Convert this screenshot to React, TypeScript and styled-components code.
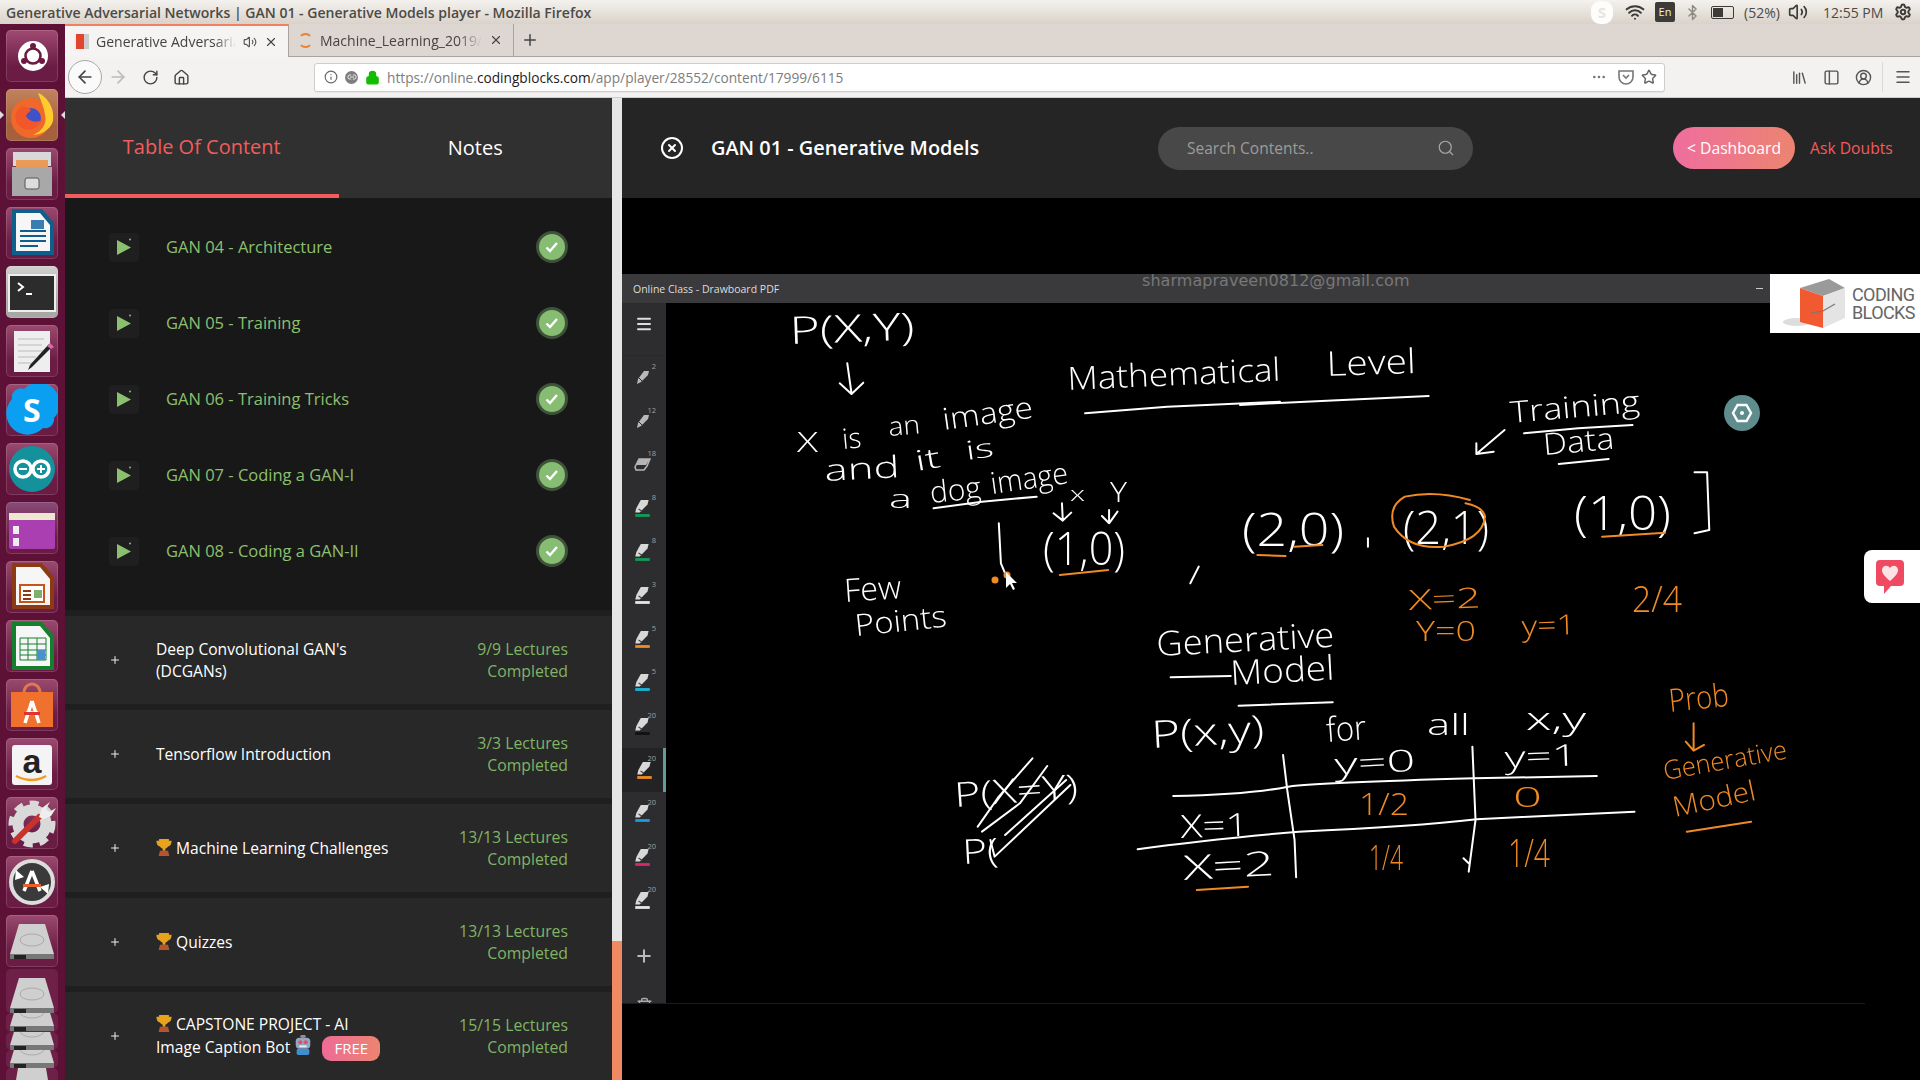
import React from "react";
import styled, { createGlobalStyle } from "styled-components";
import {
  ArrowLeft,
  ArrowRight,
  RotateCw,
  Home,
  Info,
  Link2,
  Lock,
  Ellipsis,
  Star,
  Library,
  PanelLeft,
  CircleUserRound,
  Menu,
  X,
  Plus,
  Search,
  Volume2,
  Wifi,
  Bluetooth,
  CircleX,
  Trash2,
  Settings,
} from "lucide-react";

const GlobalStyle = createGlobalStyle`
  html, body {
    margin: 0;
    width: 1920px;
    height: 1080px;
    overflow: hidden;
    background: #000;
    font-family: "Open Sans", "Noto Sans", sans-serif;
  }
  * { box-sizing: border-box; }
`;

const lectures = [
  "GAN 04 - Architecture",
  "GAN 05 - Training",
  "GAN 06 - Training Tricks",
  "GAN 07 - Coding a GAN-I",
  "GAN 08 - Coding a GAN-II",
];

const pens = [
  { n: "2", kind: "pen" },
  { n: "12", kind: "pen" },
  { n: "18", kind: "eraser" },
  { n: "8", kind: "marker", color: "#0f9d58" },
  { n: "8", kind: "marker", color: "#0f9d58" },
  { n: "3", kind: "marker", color: "#e6e6e6" },
  { n: "5", kind: "marker", color: "#f08a24" },
  { n: "5", kind: "marker", color: "#19b5d8" },
  { n: "20", kind: "marker", color: "#111" },
  { n: "20", kind: "marker", color: "#f08a24", active: true },
  { n: "20", kind: "marker", color: "#1a9be0" },
  { n: "20", kind: "marker", color: "#d8276e" },
  { n: "20", kind: "marker", color: "#e6e6e6" },
];

// [text, x, baseline, width, font size, rotation]
type Note = [string, number, number, number, number, number];

const whiteNotes: Note[] = [
  ["P(X,Y)", 790, 344, 125, 38, -2],
  ["Mathematical", 1068, 390, 213, 32, -2.5],
  ["Level", 1327, 376, 89, 34, -2],
  ["X", 797, 452, 21, 28, 0],
  ["is", 843, 449, 19, 28, -5],
  ["an", 889, 436, 32, 26, -5],
  ["image", 944, 430, 91, 30, -8],
  ["and", 825, 481, 75, 30, -3],
  ["it", 917, 471, 25, 28, -10],
  ["is", 967, 460, 28, 26, -8],
  ["a", 889, 508, 23, 26, 0],
  ["dog", 931, 503, 51, 30, -6],
  ["image", 992, 494, 78, 30, -8],
  ["x", 1070, 501, 15, 20, 0],
  ["Y", 1110, 502, 17, 28, 0],
  ["(1,0)", 1043, 565, 82, 46, 0],
  ["Few", 845, 602, 57, 32, -4],
  ["Points", 856, 636, 92, 30, -6],
  ["Generative", 1157, 656, 178, 34, -3],
  ["Model", 1231, 685, 104, 34, -3],
  ["P(x,y)", 1152, 748, 113, 38, -3],
  ["for", 1327, 742, 40, 34, -4],
  ["all", 1427, 735, 43, 30, 0],
  ["x,y", 1526, 730, 60, 32, 0],
  ["y=0", 1335, 775, 81, 30, -3],
  ["y=1", 1505, 768, 73, 30, -2],
  ["X=1", 1181, 838, 68, 32, -2],
  ["X=2", 1184, 880, 91, 34, -3],
  ["Training", 1511, 423, 130, 30, -5],
  ["Data", 1544, 455, 71, 30, -5],
  ["(2,0)", 1242, 546, 102, 46, 0],
  ["(2,1)", 1403, 544, 86, 46, 0],
  ["(1,0)", 1574, 530, 97, 48, 0],
  ["P(X=Y)", 955, 807, 124, 34, -4],
  ["P(", 963, 864, 36, 34, -3],
];

const orangeNotes: Note[] = [
  ["X=2", 1409, 610, 72, 28, -2],
  ["Y=0", 1416, 641, 60, 28, 0],
  ["y=1", 1522, 636, 54, 28, -2],
  ["2/4", 1632, 612, 50, 36, 0],
  ["1/2", 1359, 815, 50, 32, 0],
  ["0", 1513, 807, 29, 28, 0],
  ["1/4", 1369, 870, 34, 34, 0],
  ["1/4", 1508, 867, 42, 38, 0],
  ["Prob", 1670, 712, 60, 32, -6],
  ["Generative", 1665, 780, 125, 26, -10],
  ["Model", 1675, 817, 84, 28, -12],
];

const Trophy = () => (
  <svg width="16" height="17" viewBox="0 0 17 19">
    <path d="M3 0h11v2h3c0 4-1.500 6-4 6.500-.6 1.200-1.700 2-3 2.400V13H7v-2.100C5.700 10.500 4.600 9.700 4 8.500 1.500 8 0 6 0 2h3z" fill="#e8a31e" />
    <path d="M4 13h9l1.500 6h-12z" fill="#b5552e" />
  </svg>
);

const Robot = () => (
  <svg width="18" height="20" viewBox="0 0 18 22">
    <rect x="6" y="0" width="6" height="3" rx="1.500" fill="#a88" />
    <rect x="1" y="3" width="16" height="12" rx="4" fill="#8fa9c4" />
    <circle cx="6" cy="8" r="2.300" fill="#e0506a" />
    <circle cx="12" cy="8" r="2.300" fill="#e0506a" />
    <rect x="5" y="11.500" width="8" height="2" fill="#eee" />
    <rect x="2" y="15" width="14" height="7" rx="2" fill="#3f8fd0" />
  </svg>
);

const App = () => {
  return (
    <Screen>
      <GlobalStyle />
      <TopPanel>
        <WindowTitle>Generative Adversarial Networks | GAN 01 - Generative Models player - Mozilla Firefox</WindowTitle>
        <Tray>
          <SkypeBlob>S</SkypeBlob>
          <Wifi size={20} strokeWidth={2.4} color="#3c3b37" />
          <LangBox>En</LangBox>
          <Bluetooth size={17} color="#8e8b86" />
          <BatteryIcon>
            <BatteryFill />
          </BatteryIcon>
          <TrayText $w={35} $left={1}>(52%)</TrayText>
          <Volume2 size={20} color="#3c3b37" />
          <TrayText $w={62} $left={6}>12:55 PM</TrayText>
          <Settings size={18} color="#3c3b37" strokeWidth={2.6} />
        </Tray>
      </TopPanel>
      <Body>
        <Launcher />
        <Main>
          <TabStrip>
            <TabItem $active>
              <FavIcon />
              <TabLabel>Generative Adversarial Networks</TabLabel>
              <Volume2 size={14} color="#555" />
              <X size={14} color="#444" />
            </TabItem>
            <TabItem>
              <Spinner />
              <TabLabel>Machine_Learning_2019/Coding</TabLabel>
              <X size={14} color="#444" />
            </TabItem>
            <NewTab>
              <Plus size={18} color="#444" />
            </NewTab>
          </TabStrip>
          <Toolbar>
            <BackButton>
              <ArrowLeft size={20} color="#444" />
            </BackButton>
            <NavIcon $w={32}>
              <ArrowRight size={20} color="#bbb" />
            </NavIcon>
            <NavIcon $w={32}>
              <RotateCw size={17} color="#444" />
            </NavIcon>
            <NavIcon $w={30}>
              <Home size={17} color="#444" />
            </NavIcon>
            <UrlBar>
              <Info size={14} color="#666" />
              <ChainDot>
                <Link2 size={10} color="#fff" />
              </ChainDot>
              <Lock size={15} color="#12bc00" fill="#12bc00" />
              <UrlText>
                https://online.<b>codingblocks.com</b>/app/player/28552/content/17999/6115
              </UrlText>
              <Ellipsis size={16} color="#777" />
              <PocketIcon viewBox="0 0 16 16">
                <path d="M1 2h14v6a7 7 0 0 1-14 0z" fill="none" stroke="#777" strokeWidth="1.600" />
                <path d="M5 6l3 3 3-3" fill="none" stroke="#777" strokeWidth="1.600" />
              </PocketIcon>
              <Star size={16} color="#666" strokeWidth={2.2} />
            </UrlBar>
            <RightTools>
              <Library size={17} color="#555" />
              <PanelLeft size={17} color="#555" />
              <CircleUserRound size={17} color="#555" />
              <ToolDivider />
              <Menu size={18} color="#555" />
            </RightTools>
          </Toolbar>
          <Page>
            <Sidebar>
              <SideTabs>
                <SideTab $active>Table Of Content</SideTab>
                <SideTab>Notes</SideTab>
              </SideTabs>
              <LectureList>
                {lectures.map((name) => (
                  <LectureRow key={name}>
                    <PlayTile>
                      <svg width="18" height="18" viewBox="0 0 18 18">
                        <path d="M2 2l14 7.500-14 7.500z" fill="#8bc06f" />
                        <circle cx="15" cy="1.500" r="1" fill="#8bc06f" />
                      </svg>
                    </PlayTile>
                    <LectureName>{name}</LectureName>
                    <CheckBadge>
                      <svg width="14" height="12" viewBox="0 0 14 12">
                        <path d="M1.500 6.500l3.500 3.500 7-8" fill="none" stroke="#fff" strokeWidth="2.400" />
                      </svg>
                    </CheckBadge>
                  </LectureRow>
                ))}
              </LectureList>
              <SectionRow>
                <Plus size={12} color="#eee" />
                <SectionTitle>Deep Convolutional GAN's (DCGANs)</SectionTitle>
                <SectionCount>9/9 Lectures Completed</SectionCount>
              </SectionRow>
              <SectionRow>
                <Plus size={12} color="#eee" />
                <SectionTitle>Tensorflow Introduction</SectionTitle>
                <SectionCount>3/3 Lectures Completed</SectionCount>
              </SectionRow>
              <SectionRow>
                <Plus size={12} color="#eee" />
                <SectionTitle>
                  <Trophy /> Machine Learning Challenges
                </SectionTitle>
                <SectionCount>13/13 Lectures Completed</SectionCount>
              </SectionRow>
              <SectionRow>
                <Plus size={12} color="#eee" />
                <SectionTitle>
                  <Trophy /> Quizzes
                </SectionTitle>
                <SectionCount>13/13 Lectures Completed</SectionCount>
              </SectionRow>
              <SectionRow>
                <Plus size={12} color="#eee" />
                <SectionTitle>
                  <Trophy /> CAPSTONE PROJECT - AI Image Caption Bot <Robot /> <FreeTag>FREE</FreeTag>
                </SectionTitle>
                <SectionCount>15/15 Lectures Completed</SectionCount>
              </SectionRow>
            </Sidebar>
            <ScrollTrack>
              <ScrollThumb />
            </ScrollTrack>
            <Content>
              <ContentHeader>
                <CircleX size={24} color="#fff" strokeWidth={2} />
                <VideoTitle>GAN 01 - Generative Models</VideoTitle>
                <SearchBox>
                  <SearchHint>Search Contents..</SearchHint>
                  <Search size={18} color="#aaa" strokeWidth={1.500} />
                </SearchBox>
                <DashButton>&lt; Dashboard</DashButton>
                <AskLink>Ask Doubts</AskLink>
              </ContentHeader>
              <VideoArea>
                <Watermark>sharmapraveen0812@gmail.com</Watermark>
                <LogoPanel>
                  <svg width="64" height="56" viewBox="0 0 64 56">
                    <ellipse cx="14" cy="46" rx="14" ry="4" fill="#ddd" />
                    <path d="M17 12L46 3l16 9-22 8z" fill="#9a9a9a" />
                    <path d="M17 12l23 8v32l-23-6z" fill="#f15a31" />
                    <path d="M40 20l22-8v30l-22 10z" fill="#e4e4e4" />
                    <path d="M28 37l12-2 12-7" fill="none" stroke="#777" strokeWidth="1.200" />
                  </svg>
                  <LogoWords>
                    CODING
                    <br />
                    BLOCKS
                  </LogoWords>
                </LogoPanel>
                <LikeButton>
                  <svg width="30" height="36" viewBox="0 0 30 36">
                    <path d="M5 1h20a4 4 0 0 1 4 4v18a4 4 0 0 1-4 4H16l-7 8v-8H5a4 4 0 0 1-4-4V5a4 4 0 0 1 4-4z" fill="#ee4a62" />
                    <path d="M15 22C9 17 7 14 7 11c0-4.500 5.500-6 8-2 2.500-4 8-2.500 8 2 0 3-2 6-8 11z" fill="#fbe3e6" />
                  </svg>
                </LikeButton>
                <WindowBar>
                  <WindowName>Online Class - Drawboard PDF</WindowName>
                  <WindowMin />
                </WindowBar>
                <BoardRow>
                  <ToolRail>
                    <RailMenu>
                      <Menu size={18} color="#ddd" strokeWidth={2.6} />
                    </RailMenu>
                    {pens.map((p, i) => (
                      <ToolSlot key={i} $active={p.active}>
                        <ToolSize>{p.n}</ToolSize>
                        <PenGlyph kind={p.kind} color={p.color} />
                      </ToolSlot>
                    ))}
                    <RailAdd>
                      <Plus size={20} color="#bbb" strokeWidth={2.4} />
                    </RailAdd>
                    <RailTrash>
                      <Trash2 size={17} color="#aaa" />
                    </RailTrash>
                  </ToolRail>
                  <Board viewBox="666 303 1254 700" width="1254" height="700">
                    {whiteNotes.map(([t, x, y, w, s, r], i) => (
                      <NoteText key={i} x={x} y={y} fontSize={s} textLength={w} lengthAdjust="spacingAndGlyphs" transform={`rotate(${r} ${x} ${y})`} fill="#fff">
                        {t}
                      </NoteText>
                    ))}
                    {orangeNotes.map(([t, x, y, w, s, r], i) => (
                      <NoteText key={i} x={x} y={y} fontSize={s} textLength={w} lengthAdjust="spacingAndGlyphs" transform={`rotate(${r} ${x} ${y})`} fill="#f08a24">
                        {t}
                      </NoteText>
                    ))}
                    <g transform="translate(620 270) scale(.4209 .3333)">
                      <Stroke d="M540 280L550 370M522 340L550 372L578 338" />
                      <Stroke d="M1105 430L1300 410L1568 395" />
                      <Stroke d="M745 715L860 695L990 680" />
                      <Stroke d="M900 760L905 880L915 910" />
                      <Stroke d="M1050 700L1052 750M1030 730L1052 752L1072 728M1162 720L1162 760M1145 738L1162 760L1182 725" />
                      <Stroke d="M1375 890L1355 940" />
                      <Stroke d="M1045 915L1160 900" $orange />
                    </g>
                    <g transform="translate(1240 270) scale(.4337 .3333)">
                      <Stroke d="M0 405L200 392L435 378" />
                      <Stroke d="M655 490L780 475L905 465" />
                      <Stroke d="M735 582L850 567" />
                      <Stroke d="M610 480L545 552M545 520L545 552L585 545" />
                      <Stroke d="M295 805L295 830" />
                      <Stroke d="M1048 607L1077 607L1082 780L1048 790" />
                      <Stroke d="M40 855L105 858M125 830L190 825M835 800L980 788" $orange />
                      <Stroke d="M530 690Q450 660 380 680Q340 710 355 770Q390 840 470 830Q560 810 565 740Q560 710 520 700" $orange />
                    </g>
                    <g transform="translate(620 640) scale(.4209 .3333)">
                      <Stroke d="M850 560L900 470L980 355M860 575L950 490L1015 378M915 585L1060 420M890 650L1070 435M890 650L880 600" />
                    </g>
                    <g transform="translate(1100 640) scale(.523 .3333)">
                      <Stroke d="M135 112L250 108M265 197L445 187" />
                      <Stroke d="M140 468Q280 465 360 440Q420 428 715 415L950 408" />
                      <Stroke d="M72 628Q200 600 380 575Q600 560 720 538L1022 515" />
                      <Stroke d="M350 345L358 450L372 600L375 712M712 320L718 540L705 695M695 655L705 670" />
                      <Stroke d="M185 750L283 740M1122 575L1245 545" $orange />
                      <Stroke d="M1135 250L1135 330M1120 305L1135 332L1155 315" $orange />
                    </g>
                    <circle cx="995" cy="580" r="3.500" fill="#f08a24" />
                    <circle cx="1007" cy="575" r="3.500" fill="#f08a24" />
                    <path d="M1006 572v16l4-4 3 6 2-1-3-6h5z" fill="#fff" />
                    <circle cx="1742" cy="413" r="18" fill="#5f8c8c" />
                    <path d="M1733 413l4.500-8h9l4.500 8-4.500 8h-9z" fill="none" stroke="#fff" strokeWidth="2.400" />
                    <circle cx="1742" cy="413" r="2" fill="#fff" />
                  </Board>
                </BoardRow>
                <BottomRule />
              </VideoArea>
            </Content>
          </Page>
        </Main>
      </Body>
    </Screen>
  );
};

export default App;

const PenGlyph = ({ kind, color }: { kind: string; color?: string }) => {
  if (kind === "eraser") {
    return (
      <svg width="17" height="13" viewBox="0 0 17 13">
        <path d="M5 1h11l-3 7-3 4H2l-1-3z" fill="none" stroke="#b5b5b5" strokeWidth="1.500" />
        <path d="M5 1h11l-4 6H2z" fill="#b5b5b5" />
      </svg>
    );
  }
  if (kind === "pen") {
    return (
      <svg width="14" height="15" viewBox="0 0 14 15">
        <path d="M8 1h5l-1 4-7 7-4 2 1-5z" fill="#b8b8b8" />
        <path d="M3 8l3 3" stroke="#2d2d30" />
      </svg>
    );
  }
  return (
    <svg width="17" height="19" viewBox="0 0 15 17">
      <path d="M6 1h7l-1 4-7 7H1l1-4z" fill="#d8d8d8" />
      <path d="M4 9l3 2" stroke="#444" />
      <rect x="1" y="13.500" width="13" height="2.500" fill={color} />
    </svg>
  );
};

const Launcher = () => (
  <LauncherColumn>
    <Tile $bg="#a04a72">
      <svg width="52" height="52" viewBox="0 0 52 52">
        <circle cx="27" cy="26" r="15" fill="#fff" />
        <circle cx="27" cy="26" r="7.500" fill="none" stroke="#6e1a40" strokeWidth="2.600" />
        <circle cx="27" cy="16" r="3" fill="#6e1a40" />
        <circle cx="18" cy="31" r="3" fill="#6e1a40" />
        <circle cx="36" cy="31" r="3" fill="#6e1a40" />
      </svg>
    </Tile>
    <Tile $bg="#c0845e" $end="#a6603e" $running>
      <svg width="52" height="52" viewBox="0 0 52 52">
        <circle cx="25" cy="29" r="20" fill="#f0692a" />
        <path d="M32 4c10 4 17 16 15 28-3 10-14 14-20 14 10-4 14-12 12-20-1-8-4-14-7-22z" fill="#ffcb2d" />
        <circle cx="25" cy="29" r="10" fill="#3f52c8" />
        <path d="M10 24c4-8 10-8 15-3-2 3-4 3-5 6 3 6 10 7 16 4-3 8-12 12-20 8-6-4-8-10-6-15z" fill="#f2572a" />
      </svg>
    </Tile>
    <Tile $bg="#9a4a6e">
      <svg width="52" height="52" viewBox="0 0 52 52">
        <path d="M7 4h38v14H7z" fill="#d8d8d8" />
        <path d="M10 12h32v8H10z" fill="#e89a56" />
        <path d="M6 19h40v29H6z" fill="#a8a8a8" />
        <rect x="19" y="30" width="14" height="11" rx="2" fill="#ddd" stroke="#555" />
      </svg>
    </Tile>
    <Tile $bg="#9a4a6e">
      <svg width="52" height="52" viewBox="0 0 52 52">
        <path d="M6 2h30l12 14v32H6z" fill="#0f5f8c" />
        <path d="M10 6h24l10 12v26H10z" fill="#f6f6f6" />
        <path d="M14 24h26M14 29h26M14 34h26M14 39h18" stroke="#0f5f8c" strokeWidth="2" />
        <rect x="25" y="13" width="13" height="9" fill="#3a7db0" />
      </svg>
    </Tile>
    <Tile $bg="#d2d0ce" $end="#a9a7a5">
      <svg width="52" height="52" viewBox="0 0 52 52">
        <rect x="3" y="9" width="46" height="36" fill="#2c2c2c" stroke="#eee" strokeWidth="2" />
        <path d="M12 17l5 4-5 4" fill="none" stroke="#fff" strokeWidth="2" />
        <path d="M20 28h6" stroke="#fff" strokeWidth="2" />
      </svg>
    </Tile>
    <Tile $bg="#9a4a6e">
      <svg width="52" height="52" viewBox="0 0 52 52">
        <rect x="8" y="6" width="36" height="41" fill="#eee" />
        <path d="M12 14h26M12 20h24M12 26h26M12 32h18M12 38h16" stroke="#bbb" />
        <path d="M46 22l-20 20-4 3 2-5 19-21z" fill="#222" />
        <path d="M44 18l4 4-3 2-4-3z" fill="#d86ba8" />
      </svg>
    </Tile>
    <Tile $bg="#9a4a6e">
      <svg width="52" height="52" viewBox="0 0 52 52">
        <path d="M18 5a9 9 0 0 0-12 10 20 20 0 0 0 31 29 9 9 0 0 0 11-10A20 20 0 0 0 18 5z" fill="#0a9ff0" />
        <text x="17" y="38" fontSize="32" fontFamily="Open Sans" fontWeight="700" fill="#fff">S</text>
      </svg>
    </Tile>
    <Tile $bg="#9a4a6e">
      <svg width="52" height="52" viewBox="0 0 52 52">
        <circle cx="26" cy="26" r="23" fill="#14919b" />
        <circle cx="17" cy="26" r="8" fill="none" stroke="#fff" strokeWidth="3.500" />
        <circle cx="35" cy="26" r="8" fill="none" stroke="#fff" strokeWidth="3.500" />
        <path d="M13 26h8M31 26h8M35 22v8" stroke="#fff" strokeWidth="2" />
      </svg>
    </Tile>
    <Tile $bg="#8a4a78">
      <svg width="52" height="52" viewBox="0 0 52 52">
        <rect x="3" y="11" width="46" height="36" rx="2" fill="#a93fb0" />
        <rect x="3" y="11" width="46" height="7" fill="#eee7cf" />
        <rect x="7" y="24" width="6" height="8" fill="#eee" />
        <rect x="7" y="36" width="6" height="8" fill="#eee" />
      </svg>
    </Tile>
    <Tile $bg="#9a4a6e">
      <svg width="52" height="52" viewBox="0 0 52 52">
        <path d="M6 2h30l12 14v32H6z" fill="#8c3a14" />
        <path d="M10 6h24l10 12v26H10z" fill="#f6f6f6" />
        <rect x="14" y="24" width="24" height="17" fill="#fff" stroke="#c8541c" strokeWidth="2" />
        <path d="M17 30h8M17 34h8M17 38h8" stroke="#8c3a14" strokeWidth="2" />
        <rect x="28" y="29" width="8" height="8" fill="#7fb069" />
      </svg>
    </Tile>
    <Tile $bg="#9a4a6e">
      <svg width="52" height="52" viewBox="0 0 52 52">
        <path d="M6 2h30l12 14v34H6z" fill="#14802e" />
        <path d="M10 6h24l10 12v28H10z" fill="#f6f6f6" />
        <path d="M14 18h26v22H14zM14 24h26M14 30h26M14 35h26M22 18v22M31 18v22" fill="none" stroke="#14802e" />
        <rect x="31" y="30" width="8" height="10" fill="#4a90d0" />
      </svg>
    </Tile>
    <Tile $bg="#9a4a6e">
      <svg width="52" height="52" viewBox="0 0 52 52">
        <path d="M18 14c0-12 16-12 16 0" fill="none" stroke="#e07a4a" strokeWidth="3" />
        <path d="M5 13h42v35H5z" fill="#f0702e" />
        <path d="M26 22l-7 22M26 22l7 22M20 34h12" fill="none" stroke="#fff" strokeWidth="3.500" />
        <rect x="18" y="33" width="16" height="3" fill="#d33" />
      </svg>
    </Tile>
    <Tile $bg="#9a4a6e">
      <svg width="52" height="52" viewBox="0 0 52 52">
        <rect x="6" y="7" width="40" height="40" rx="3" fill="#f4f4f4" />
        <text x="26" y="35" fontSize="34" fontFamily="Liberation Sans" fontWeight="700" textAnchor="middle" fill="#222">a</text>
        <path d="M10 38q16 8 30 0" fill="none" stroke="#f59a1a" strokeWidth="2.500" />
      </svg>
    </Tile>
    <Tile $bg="#9a4a6e">
      <svg width="52" height="52" viewBox="0 0 52 52">
        <circle cx="26" cy="27" r="14" fill="none" stroke="#d9d9d9" strokeWidth="11" />
        <circle cx="26" cy="27" r="21" fill="none" stroke="#d9d9d9" strokeWidth="5" strokeDasharray="9 7" />
        <path d="M9 44L33 20" stroke="#c8322c" strokeWidth="6" strokeLinecap="round" />
        <path d="M33 20l3-9 8-6-4 7 3 3 7-4-5 8-8 3z" fill="#eee" />
      </svg>
    </Tile>
    <Tile $bg="#9a4a6e">
      <svg width="52" height="52" viewBox="0 0 52 52">
        <circle cx="26" cy="26" r="21" fill="#3a3a3a" stroke="#ddd" strokeWidth="4" />
        <path d="M26 15l-8 20M26 15l8 20" fill="none" stroke="#fff" strokeWidth="3.500" />
        <rect x="17" y="28" width="18" height="3" fill="#e8602c" />
        <path d="M10 14l-1 10 9-3zM42 38l1-10-9 3z" fill="#fff" />
      </svg>
    </Tile>
    <Tile $bg="#9a4a6e">
      <DiskDrawing />
    </Tile>
    <StackTile $h={44}>
      <DiskDrawing />
    </StackTile>
    <StackTile $h={19}>
      <DiskDrawing />
    </StackTile>
    <StackTile $h={18}>
      <DiskDrawing />
    </StackTile>
    <StackTile $h={18}>
      <DiskDrawing />
    </StackTile>
    <StackTile $h={18}>
      <svg width="52" height="52" viewBox="0 0 52 52">
        <path d="M12 26h28l3 18H9z" fill="#cfcfcf" />
      </svg>
    </StackTile>
  </LauncherColumn>
);

const DiskDrawing = () => (
  <svg width="52" height="52" viewBox="0 0 52 52">
    <path d="M13 9h26l9 30H4z" fill="#cfcfcf" />
    <ellipse cx="26" cy="25" rx="12" ry="6" fill="none" stroke="#aaa" />
    <path d="M4 39h44v5H4z" fill="#777" />
    <path d="M8 40h12v4H8z" fill="#222" />
  </svg>
);

const Screen = styled.div`
  width: 1920px;
  height: 1080px;
  display: flex;
  flex-direction: column;
  overflow: hidden;
`;

const TopPanel = styled.div`
  height: 24px;
  flex-shrink: 0;
  display: flex;
  align-items: center;
  justify-content: space-between;
  padding: 0 8px 0 6px;
  background: linear-gradient(#f4f2ee, #dad2ca);
`;

const WindowTitle = styled.div`
  font-size: 14.05px;
  font-weight: 600;
  color: #4c4a45;
  white-space: nowrap;
`;

const Tray = styled.div`
  display: flex;
  align-items: center;
  gap: 9px;
`;

const SkypeBlob = styled.div`
  width: 22px;
  height: 23px;
  margin-right: 3px;
  border-radius: 9px;
  background: #fdfdfc;
  color: #e9e4df;
  font-size: 15px;
  font-weight: 700;
  text-align: center;
  line-height: 23px;
`;

const LangBox = styled.div`
  width: 20px;
  height: 20px;
  margin-left: 1px;
  border-radius: 2px;
  background: #3c3b37;
  color: #f2efeb;
  font-size: 11px;
  line-height: 20px;
  text-align: center;
`;

const BatteryIcon = styled.div`
  width: 23px;
  height: 13px;
  margin-left: 1px;
  padding: 1px;
  border: 1.5px solid #3c3b37;
  border-radius: 2px;
`;

const BatteryFill = styled.div`
  width: 55%;
  height: 100%;
  background: #3c3b37;
`;

const TrayText = styled.div<{ $w: number; $left: number }>`
  width: ${(p) => p.$w}px;
  margin-left: ${(p) => p.$left}px;
  color: #4c4a45;
  font-size: 14px;
  white-space: nowrap;
`;

const Body = styled.div`
  flex: 1;
  min-height: 0;
  display: flex;
`;

const LauncherColumn = styled.div`
  width: 65px;
  flex-shrink: 0;
  display: flex;
  flex-direction: column;
  gap: 7px;
  padding: 6px 0 0 6px;
  background: #5e1136;
  overflow: hidden;
`;

const Tile = styled.div<{ $bg: string; $end?: string; $running?: boolean }>`
  position: relative;
  width: 52px;
  height: 52px;
  flex-shrink: 0;
  border-radius: 5px;
  background: linear-gradient(180deg, ${(p) => p.$bg}, ${(p) => p.$end || "#6a1c44"} 70%);
  box-shadow: inset 0 0 0 1px rgba(255, 255, 255, 0.14);

  ${(p) =>
    p.$running &&
    `
    &::after {
      content: "";
      position: absolute;
      right: -7px;
      top: 22px;
      border: 4px solid transparent;
      border-right-color: #ddd;
      border-left-width: 0;
    }
    &::before {
      content: "";
      position: absolute;
      left: -6px;
      top: 22px;
      border: 4px solid transparent;
      border-left-color: #ddd;
      border-right-width: 0;
    }
  `}
`;

const StackTile = styled.div<{ $h: number }>`
  height: ${(p) => p.$h}px;
  width: 52px;
  flex-shrink: 0;
  margin-top: ${(p) => (p.$h > 30 ? -5 : -7)}px;
  overflow: hidden;
  border-radius: 5px;
  background: #6e2048;

  svg {
    margin-top: ${(p) => (p.$h > 30 ? 0 : -26)}px;
  }
`;

const Main = styled.div`
  flex: 1;
  min-width: 0;
  display: flex;
  flex-direction: column;
`;

const TabStrip = styled.div`
  height: 33px;
  flex-shrink: 0;
  display: flex;
  background: #ded6d0;
  border-bottom: 1px solid #a9a39d;
`;

const TabItem = styled.div<{ $active?: boolean }>`
  width: ${(p) => (p.$active ? 224 : 225)}px;
  height: ${(p) => (p.$active ? 33 : 32)}px;
  display: flex;
  align-items: center;
  gap: 7px;
  padding: 0 10px 0 9px;
  background: ${(p) => (p.$active ? "#f5f4f2" : "transparent")};
  border-top: ${(p) => (p.$active ? "2px solid #f08060" : "none")};
  border-right: 1px solid #a9a39d;
  font-size: 14px;
  color: #444;
`;

const FavIcon = styled.div`
  width: 15px;
  height: 15px;
  flex-shrink: 0;
  background: linear-gradient(90deg, #eee 15%, #e2452c 15%, #e2452c 70%, #ccc 70%);
`;

const Spinner = styled.div`
  width: 15px;
  height: 15px;
  flex-shrink: 0;
  border-radius: 50%;
  border: 2px solid transparent;
  border-top-color: #f07f2c;
  border-bottom-color: #f07f2c;
`;

const TabLabel = styled.div`
  flex: 1;
  min-width: 0;
  overflow: hidden;
  white-space: nowrap;
  mask-image: linear-gradient(90deg, #000 85%, transparent);
`;

const NewTab = styled.div`
  width: 32px;
  display: flex;
  align-items: center;
  justify-content: center;
`;

const Toolbar = styled.div`
  height: 41px;
  flex-shrink: 0;
  display: flex;
  align-items: center;
  padding-left: 3px;
  background: #f3f2f0;
  border-bottom: 1px solid #cfcdca;
`;

const BackButton = styled.div`
  width: 34px;
  height: 34px;
  flex-shrink: 0;
  display: flex;
  align-items: center;
  justify-content: center;
  border-radius: 50%;
  border: 1px solid #a8a8a8;
  background: #fafafa;
`;

const NavIcon = styled.div<{ $w: number }>`
  width: ${(p) => p.$w}px;
  display: flex;
  justify-content: center;
`;

const UrlBar = styled.div`
  width: 1351px;
  height: 29px;
  margin-left: 118px;
  flex-shrink: 0;
  display: flex;
  align-items: center;
  gap: 7px;
  padding: 0 7px 0 9px;
  background: #fff;
  border: 1px solid #cfcdca;
  border-radius: 3px;
  box-shadow: 0 1px 1px rgba(0, 0, 0, 0.05);

  svg:nth-last-child(3) {
    margin-right: 4px;
  }
`;

const ChainDot = styled.div`
  width: 13px;
  height: 13px;
  display: flex;
  align-items: center;
  justify-content: center;
  border-radius: 50%;
  background: #7d7d7d;
`;

const UrlText = styled.div`
  flex: 1;
  font-size: 13.7px;
  color: #7d7d7d;
  white-space: nowrap;

  b {
    font-weight: 400;
    color: #1c1b22;
  }
`;

const PocketIcon = styled.svg`
  width: 16px;
  height: 16px;
`;

const RightTools = styled.div`
  display: flex;
  align-items: center;
  gap: 15px;
  margin-left: 126px;
`;

const ToolDivider = styled.div`
  width: 1px;
  height: 30px;
  background: #dcdad7;
  margin: 0 -4px 0 -5px;
`;

const Page = styled.div`
  flex: 1;
  min-height: 0;
  display: flex;
`;

const Sidebar = styled.div`
  width: 547px;
  flex-shrink: 0;
  display: flex;
  flex-direction: column;
  background: #1f1f1f;
`;

const SideTabs = styled.div`
  height: 100px;
  flex-shrink: 0;
  display: flex;
  background: #303030;
`;

const SideTab = styled.div<{ $active?: boolean }>`
  flex: 1;
  display: flex;
  align-items: center;
  justify-content: center;
  padding-top: ${(p) => (p.$active ? 0 : 3)}px;
  font-size: 20px;
  color: ${(p) => (p.$active ? "#f25c5c" : "#fff")};
  border-bottom: 4px solid ${(p) => (p.$active ? "#f25c5c" : "transparent")};
`;

const LectureList = styled.div`
  height: 412px;
  flex-shrink: 0;
  padding-top: 11px;
  background: #181818;
`;

const LectureRow = styled.div`
  height: 76px;
  display: flex;
  align-items: center;
  padding: 0 44px;
`;

const PlayTile = styled.div`
  width: 30px;
  height: 29px;
  display: flex;
  align-items: center;
  justify-content: center;
  border-radius: 4px;
  background: #1f1f1f;
`;

const LectureName = styled.div`
  flex: 1;
  margin: 0 0 2px 27px;
  font-size: 16.5px;
  color: #8cc06e;
`;

const CheckBadge = styled.div`
  width: 32px;
  height: 32px;
  display: flex;
  align-items: center;
  justify-content: center;
  border-radius: 50%;
  background: #86bd72;
  border: 3px solid #3d5238;
`;

const SectionRow = styled.div`
  height: 88px;
  flex-shrink: 0;
  margin-top: 6px;
  display: flex;
  align-items: center;
  padding: 0 44px;
  background: #282828;

  > svg {
    flex-shrink: 0;
  }
`;

const SectionTitle = styled.div`
  width: 236px;
  margin-left: 35px;
  font-size: 15.6px;
  line-height: 22px;
  color: #fff;

  svg {
    vertical-align: -2px;
  }
`;

const SectionCount = styled.div`
  width: 120px;
  margin-left: auto;
  font-size: 15.8px;
  line-height: 22px;
  color: #80b464;
  text-align: right;
`;

const FreeTag = styled.span`
  display: inline-block;
  width: 58px;
  height: 25px;
  margin: -2px 0 -2px 6px;
  vertical-align: middle;
  border-radius: 9px;
  background: linear-gradient(90deg, #ee6b97, #ec8470);
  color: #fff;
  font-size: 15px;
  line-height: 25px;
  text-align: center;
`;

const ScrollTrack = styled.div`
  width: 10px;
  flex-shrink: 0;
  display: flex;
  flex-direction: column;
  justify-content: flex-end;
  background: #e6e6e6;
`;

const ScrollThumb = styled.div`
  height: 139px;
  background: #ef8a62;
`;

const Content = styled.div`
  flex: 1;
  min-width: 0;
  display: flex;
  flex-direction: column;
  background: #000;
`;

const ContentHeader = styled.div`
  height: 100px;
  flex-shrink: 0;
  display: flex;
  align-items: center;
  padding: 0 28px 0 38px;
  background: #252525;
`;

const VideoTitle = styled.div`
  flex: 1;
  margin-left: 27px;
  margin-bottom: 1px;
  font-size: 19.9px;
  font-weight: 600;
  color: #fff;
`;

const SearchBox = styled.div`
  width: 315px;
  height: 43px;
  display: flex;
  align-items: center;
  justify-content: space-between;
  margin-right: 200px;
  padding: 0 18px 0 29px;
  border-radius: 22px;
  background: #484848;
`;

const SearchHint = styled.div`
  font-size: 15.5px;
  color: #9c9c9c;
`;

const DashButton = styled.div`
  width: 122px;
  height: 42px;
  display: flex;
  align-items: center;
  justify-content: center;
  border-radius: 21px;
  background: linear-gradient(90deg, #ef6e9e, #ec8470);
  color: #fff;
  font-size: 15.7px;
`;

const AskLink = styled.div`
  width: 82px;
  margin-left: 15px;
  color: #f25c5c;
  font-size: 15.7px;
  white-space: nowrap;
`;

const VideoArea = styled.div`
  position: relative;
  flex: 1;
  min-height: 0;
  padding-top: 76px;
  display: flex;
  flex-direction: column;
`;

const Watermark = styled.div`
  position: absolute;
  left: 520px;
  top: 73px;
  font-family: "DejaVu Sans", sans-serif;
  font-size: 16px;
  letter-spacing: 0.05px;
  color: #777;
  z-index: 2;
`;

const LogoPanel = styled.div`
  position: absolute;
  top: 76px;
  right: 0;
  width: 150px;
  height: 59px;
  display: flex;
  align-items: center;
  gap: 5px;
  padding-left: 13px;
  background: #fff;
  z-index: 2;
`;

const LogoWords = styled.div`
  font-family: "Roboto", sans-serif;
  font-size: 18px;
  line-height: 18px;
  letter-spacing: -0.6px;
  color: #666;
`;

const LikeButton = styled.div`
  position: absolute;
  right: 0;
  top: 352px;
  width: 56px;
  height: 53px;
  display: flex;
  align-items: center;
  justify-content: center;
  padding-right: 5px;
  border-radius: 8px 0 0 8px;
  background: #fff;
  z-index: 2;
`;

const WindowBar = styled.div`
  height: 29px;
  flex-shrink: 0;
  display: flex;
  align-items: center;
  padding-left: 11px;
  padding-right: 157px;
  background: #3a3a3c;
`;

const WindowName = styled.div`
  flex: 1;
  font-size: 10.5px;
  color: #ddd;
`;

const WindowMin = styled.div`
  width: 7px;
  height: 1px;
  background: #ccc;
`;

const BoardRow = styled.div`
  height: 700px;
  flex-shrink: 0;
  display: flex;
  overflow: hidden;
`;

const ToolRail = styled.div`
  width: 44px;
  flex-shrink: 0;
  display: flex;
  flex-direction: column;
  background: #2d2d30;
  overflow: hidden;
`;

const RailMenu = styled.div`
  height: 53px;
  flex-shrink: 0;
  padding-top: 12px;
  display: flex;
  justify-content: center;
  align-items: flex-start;
  border-bottom: 1px solid #29292b;
`;

const ToolSlot = styled.div<{ $active?: boolean }>`
  position: relative;
  height: 43.6px;
  flex-shrink: 0;
  display: flex;
  align-items: center;
  justify-content: center;
  background: ${(p) => (p.$active ? "#232325" : "transparent")};
  border-right: 3px solid ${(p) => (p.$active ? "#5f9f9a" : "transparent")};
  padding-left: ${(p) => (p.$active ? 3 : 0)}px;
`;

const ToolSize = styled.span`
  position: absolute;
  right: 7px;
  top: 6px;
  font-size: 7.5px;
  line-height: 9px;
  color: #a0a0a0;
`;

const RailAdd = styled.div`
  height: 44px;
  flex-shrink: 0;
  margin-top: 11px;
  display: flex;
  align-items: center;
  justify-content: center;
`;

const RailTrash = styled.div`
  height: 44px;
  flex-shrink: 0;
  display: flex;
  align-items: center;
  justify-content: center;
  padding-top: 12px;
`;

const Board = styled.svg`
  flex-shrink: 0;
  display: block;
  filter: blur(0.3px);
`;

const NoteText = styled.text`
  font-family: "Open Sans", sans-serif;
  font-weight: 300;
`;

const Stroke = styled.path<{ $orange?: boolean }>`
  fill: none;
  stroke: ${(p) => (p.$orange ? "#f08a24" : "#fff")};
  stroke-width: 2;
  stroke-linecap: round;
  stroke-linejoin: round;
  vector-effect: non-scaling-stroke;
`;

const BottomRule = styled.div`
  width: 1243px;
  height: 1px;
  background: #1c1c1c;
`;
